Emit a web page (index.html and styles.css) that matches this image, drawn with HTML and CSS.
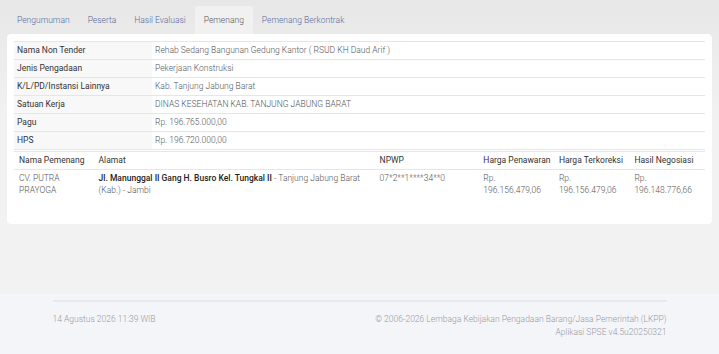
FILE: index.html
```html
<!DOCTYPE html>
<html>
<head>
  <link rel="stylesheet" href="styles.css">
</head>
<body>
  <div class="page">
    <ul class="tabs">
      <li class="tab">Pengumuman</li>
      <li class="tab">Peserta</li>
      <li class="tab">Hasil Evaluasi</li>
      <li class="tab active">Pemenang</li>
      <li class="tab">Pemenang Berkontrak</li>
    </ul>
    <div class="card">
      <table class="info">
        <tr><th>Nama Non Tender</th><td>Rehab Sedang Bangunan Gedung Kantor ( RSUD KH Daud Arif )</td></tr>
        <tr><th>Jenis Pengadaan</th><td>Pekerjaan Konstruksi</td></tr>
        <tr><th>K/L/PD/Instansi Lainnya</th><td>Kab. Tanjung Jabung Barat</td></tr>
        <tr><th>Satuan Kerja</th><td>DINAS KESEHATAN KAB. TANJUNG JABUNG BARAT</td></tr>
        <tr><th>Pagu</th><td>Rp. 196.765.000,00</td></tr>
        <tr><th>HPS</th><td>Rp. 196.720.000,00</td></tr>
      </table>
      <table class="winner">
        <tr>
          <th class="c-name">Nama Pemenang</th>
          <th class="c-addr">Alamat</th>
          <th class="c-npwp">NPWP</th>
          <th class="c-price">Harga Penawaran</th>
          <th class="c-price">Harga Terkoreksi</th>
          <th class="c-price">Hasil Negosiasi</th>
        </tr>
        <tr>
          <td>CV. PUTRA PRAYOGA</td>
          <td><b>Jl. Manunggal II Gang H. Busro Kel. Tungkal II</b> - Tanjung Jabung Barat (Kab.) - Jambi</td>
          <td>07*2**1****34**0</td>
          <td>Rp. 196.156.479,06</td>
          <td>Rp. 196.156.479,06</td>
          <td>Rp. 196.148.776,66</td>
        </tr>
      </table>
    </div>
  </div>
  <footer class="footer">
    <div class="footer-inner">
      <div class="date">14 Agustus 2026 11:39 WIB</div>
      <div class="copy">
        <div>© 2006-2026 Lembaga Kebijakan Pengadaan Barang/Jasa Pemerintah (LKPP)</div>
        <div>Aplikasi SPSE v4.5u20250321</div>
      </div>
    </div>
  </footer>
</body>
</html>
```

FILE: styles.css
```css
html, body {
  margin: 0;
  padding: 0;
}

body {
  font-family: Roboto, "Liberation Sans", sans-serif;
  font-size: 8.5px;
  color: #333;
  background: linear-gradient(#e7e7e7, #f2f2f2 120px);
  height: 354px;
  display: flex;
  flex-direction: column;
}

.page {
  padding: 6px 7px 0 7px;
  flex: 1;
}

.tabs {
  list-style: none;
  margin: 0;
  padding: 0 0 0 1px;
  display: flex;
}

.tab {
  padding: 8px 9px 8px 9px;
  line-height: 12px;
  color: #56699c;
  font-weight: 300;
  border-radius: 3px 3px 0 0;
}

.tab.active {
  background: #f1f1f1;
  color: #555;
}

.card {
  background: #fff;
  border-radius: 4px;
  padding: 7px 7px 25px 7px;
  box-shadow: 0 0 1px rgba(0, 0, 0, 0.04);
}

table {
  width: 100%;
  border-collapse: collapse;
}

.info th,
.info td {
  border-top: 1px solid #e6e6e6;
  height: 17px;
  padding: 0 3px;
  line-height: 11px;
  text-align: left;
}

.info tr:last-child th,
.info tr:last-child td {
  border-bottom: 1px solid #e6e6e6;
}

.info th {
  width: 132px;
  font-weight: 400;
  background: #f8f8f8;
  color: #333;
}

.info td {
  font-weight: 300;
  color: #555;
}

.winner {
  table-layout: fixed;
  margin-top: 1px;
}

.winner th {
  text-align: left;
  font-weight: 400;
  color: #333;
  border-top: 1px solid #e6e6e6;
  border-bottom: 1px solid #e6e6e6;
  height: 17px;
  padding: 0 1px 0 5px;
  line-height: 11px;
  white-space: nowrap;
}

.winner td {
  vertical-align: top;
  font-weight: 300;
  color: #555;
  padding: 2px 1px 3px 5px;
  line-height: 12px;
}

.winner td b {
  font-weight: 500;
  color: #222;
}

.c-name { width: 73px; }
.c-addr { width: 273px; }
.c-npwp { width: 97px; }
.c-price { width: 69px; }

.footer {
  background: #f4f5f8;
  height: 60px;
  padding-top: 6px;
  box-sizing: border-box;
}

.footer-inner {
  width: 614px;
  margin: 0 auto;
  border-top: 2px solid #e9eaee;
  padding-top: 11px;
  display: flex;
  justify-content: space-between;
  color: #9a9a9f;
  font-weight: 300;
  line-height: 13px;
}

.copy {
  text-align: right;
}
```
